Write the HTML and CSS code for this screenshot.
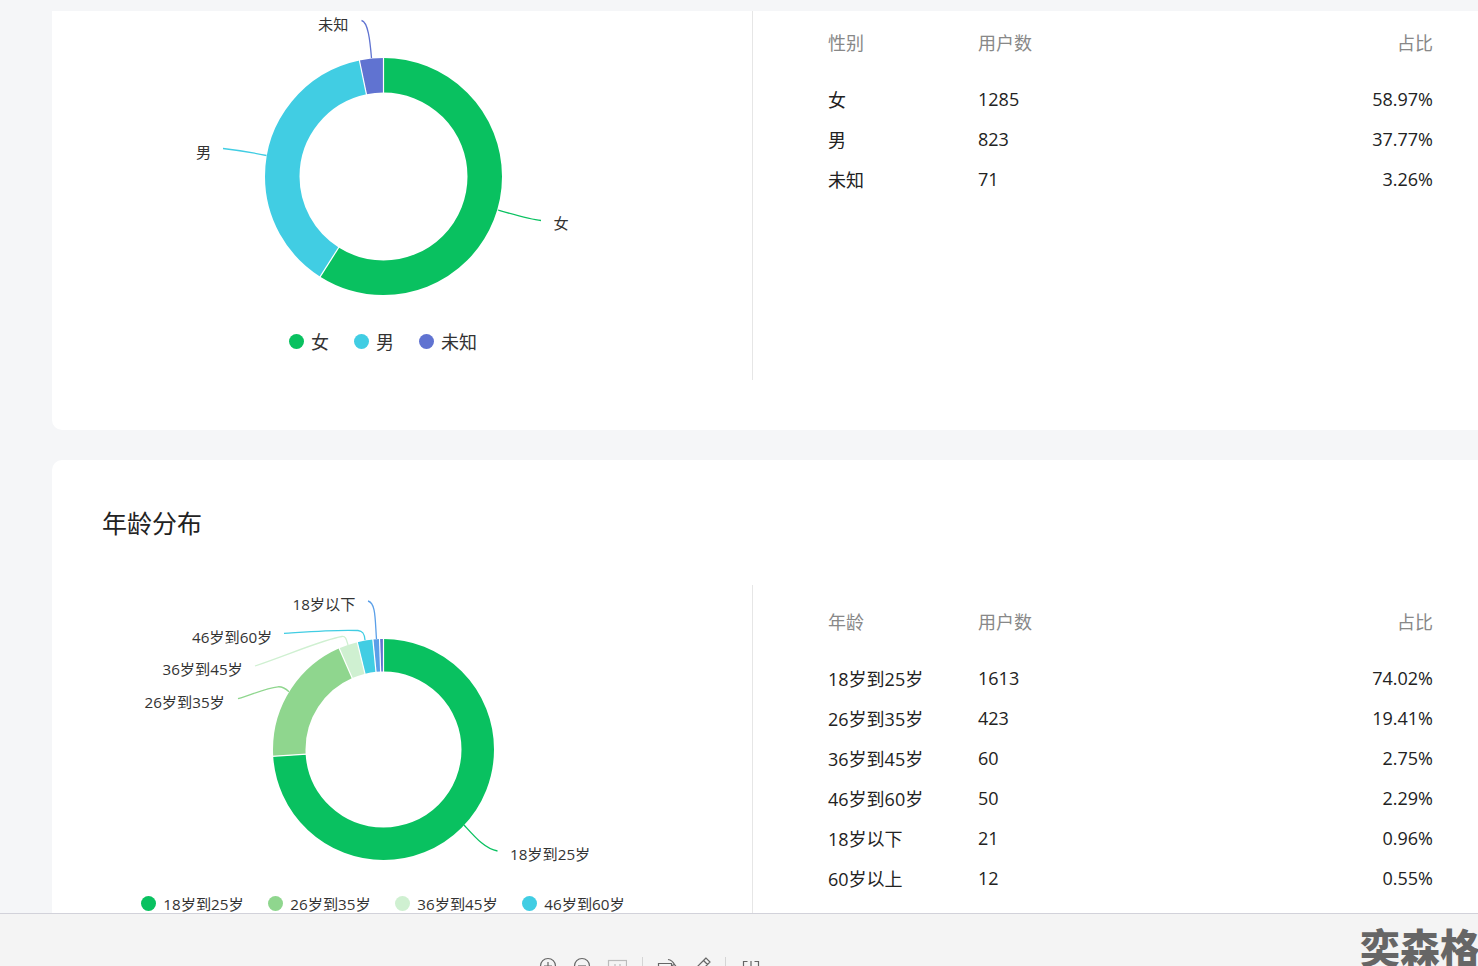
FILE: index.html
```html
<!DOCTYPE html>
<html lang="zh">
<head>
<meta charset="utf-8">
<title>用户分布</title>
<link rel="stylesheet" href="styles.css">
</head>
<body>
<main class="content">
  <section class="card card-gender">
    <div class="split split-gender">
      <div class="chart-pane">
        <svg class="chart chart-gender" viewBox="0 0 700 315" width="700" height="315">
          <g transform="translate(-52 -11)">
            <g fill="none" stroke-width="34.5" transform="rotate(-90 383.5 176.5)">
              <circle class="seg-green" cx="383.5" cy="176.5" r="101.25" pathLength="100" stroke-dasharray="58.97 41.03"/>
              <circle class="seg-cyan" cx="383.5" cy="176.5" r="101.25" pathLength="100" stroke-dasharray="37.77 62.23" stroke-dashoffset="-58.97"/>
              <circle class="seg-indigo" cx="383.5" cy="176.5" r="101.25" pathLength="100" stroke-dasharray="3.26 96.74" stroke-dashoffset="-96.74"/>
            </g>
            <g class="sep">
              <line x1="383.5" y1="93.5" x2="383.5" y2="56.5"/>
              <line x1="339.2" y1="246.7" x2="319.4" y2="277.9"/>
              <line x1="366.6" y1="95.2" x2="359.1" y2="59"/>
            </g>
            <g fill="none" class="leaders">
              <path class="ln-indigo" d="M371.5 58C370 40 368 22 361.5 20.5"/>
              <path class="ln-cyan" d="M266.5 155.5Q245 151 223 148.5"/>
              <path class="ln-green" d="M498 210C515 215 530 219.5 541 220.5"/>
            </g>
            <text class="lbl" x="318" y="30">未知</text>
            <text class="lbl" x="196" y="158">男</text>
            <text class="lbl" x="553.5" y="229">女</text>
          </g>
        </svg>
        <ul class="legend legend-lg">
          <li><i class="dot bg-green"></i>女</li>
          <li><i class="dot bg-cyan"></i>男</li>
          <li><i class="dot bg-indigo"></i>未知</li>
        </ul>
      </div>
      <div class="table-pane">
        <div class="row head"><span class="c1">性别</span><span class="c2">用户数</span><span class="c3">占比</span></div>
        <div class="row"><span class="c1">女</span><span class="c2">1285</span><span class="c3">58.97%</span></div>
        <div class="row"><span class="c1">男</span><span class="c2">823</span><span class="c3">37.77%</span></div>
        <div class="row"><span class="c1">未知</span><span class="c2">71</span><span class="c3">3.26%</span></div>
      </div>
    </div>
  </section>

  <section class="card card-age">
    <h2 class="card-title">年龄分布</h2>
    <div class="split split-age">
      <div class="chart-pane">
        <svg class="chart chart-age" viewBox="0 0 700 300" width="700" height="300">
          <g transform="translate(-52 -585)">
            <g fill="none" stroke-width="32.5" transform="rotate(-90 383.5 749.5)">
              <circle class="seg-green" cx="383.5" cy="749.5" r="94.25" pathLength="100" stroke-dasharray="74.02 25.98"/>
              <circle class="seg-lime" cx="383.5" cy="749.5" r="94.25" pathLength="100" stroke-dasharray="19.41 80.59" stroke-dashoffset="-74.02"/>
              <circle class="seg-pale" cx="383.5" cy="749.5" r="94.25" pathLength="100" stroke-dasharray="2.75 97.25" stroke-dashoffset="-93.43"/>
              <circle class="seg-cyan" cx="383.5" cy="749.5" r="94.25" pathLength="100" stroke-dasharray="2.29 97.71" stroke-dashoffset="-96.18"/>
              <circle class="seg-blue" cx="383.5" cy="749.5" r="94.25" pathLength="100" stroke-dasharray="0.96 99.04" stroke-dashoffset="-98.47"/>
              <circle class="seg-indigo" cx="383.5" cy="749.5" r="94.25" pathLength="100" stroke-dasharray="0.57 99.43" stroke-dashoffset="-99.43"/>
            </g>
            <g class="sep">
              <line x1="383.5" y1="672.5" x2="383.5" y2="637.5"/>
              <line x1="306.6" y1="754.2" x2="271.7" y2="756.4"/>
              <line x1="352.6" y1="679" x2="338.6" y2="646.9"/>
              <line x1="365.2" y1="674.7" x2="356.9" y2="640.7"/>
              <line x1="376.1" y1="672.9" x2="372.7" y2="638"/>
              <line x1="380.7" y1="672.5" x2="379.5" y2="637.6"/>
            </g>
            <g fill="none" class="leaders">
              <path class="ln-blue" d="M376.5 639C375 620 376 603 368 601"/>
              <path class="ln-cyan" d="M365 640C364.5 634 363 631 358 630.5C335 629.5 305 632 284 633.3"/>
              <path class="ln-pale" d="M348 645C346.5 640 346 636 342 636.5C325 639 290 654 255 666"/>
              <path class="ln-lime" d="M289 691.7C285 688 282 686.5 278 686.8C265 688 252 695 238 698.7"/>
              <path class="ln-green" d="M464 825C475 837 485 849 497.5 851"/>
            </g>
            <text class="lbl" x="292.5" y="610">18岁以下</text>
            <text class="lbl" x="192" y="643">46岁到60岁</text>
            <text class="lbl" x="162.5" y="675">36岁到45岁</text>
            <text class="lbl" x="144.5" y="708">26岁到35岁</text>
            <text class="lbl" x="510" y="860">18岁到25岁</text>
          </g>
        </svg>
        <ul class="legend legend-sm">
          <li><i class="dot bg-green"></i>18岁到25岁</li>
          <li><i class="dot bg-lime"></i>26岁到35岁</li>
          <li><i class="dot bg-pale"></i>36岁到45岁</li>
          <li><i class="dot bg-cyan"></i>46岁到60岁</li>
        </ul>
      </div>
      <div class="table-pane table-age">
        <div class="row head"><span class="c1">年龄</span><span class="c2">用户数</span><span class="c3">占比</span></div>
        <div class="row"><span class="c1">18岁到25岁</span><span class="c2">1613</span><span class="c3">74.02%</span></div>
        <div class="row"><span class="c1">26岁到35岁</span><span class="c2">423</span><span class="c3">19.41%</span></div>
        <div class="row"><span class="c1">36岁到45岁</span><span class="c2">60</span><span class="c3">2.75%</span></div>
        <div class="row"><span class="c1">46岁到60岁</span><span class="c2">50</span><span class="c3">2.29%</span></div>
        <div class="row"><span class="c1">18岁以下</span><span class="c2">21</span><span class="c3">0.96%</span></div>
        <div class="row"><span class="c1">60岁以上</span><span class="c2">12</span><span class="c3">0.55%</span></div>
      </div>
    </div>
  </section>
</main>

<footer class="toolbar">
  <div class="tools">
    <svg class="tool" width="20" height="20" viewBox="0 0 20 20"><circle cx="10" cy="10" r="7.5"/><path d="M10 6v8M6 10h8"/></svg>
    <svg class="tool t-gap" width="20" height="20" viewBox="0 0 20 20"><circle cx="10" cy="10" r="7.5"/><path d="M6 10h8"/></svg>
    <svg class="tool t-gap-box" width="20" height="20" viewBox="0 0 20 20"><rect class="faint" x="1.500" y="4.500" width="18" height="14"/><path class="faint" d="M8 8v7M13 8v7"/></svg>
    <i class="tool-div"></i>
    <svg class="tool" width="20" height="20" viewBox="0 0 20 20"><path d="M14.500 7.500H1.500V19h13zM11 3.500c3 .5 5 2 6.500 5M15 9.500l2.500-1 1.500 2"/></svg>
    <svg class="tool t-gap2" width="20" height="20" viewBox="0 0 20 20"><path d="M13 2L4 11v4h4L17 6zM10.500 4.500l4 4"/></svg>
    <i class="tool-div tool-div-b"></i>
    <svg class="tool" width="20" height="20" viewBox="0 0 20 20"><path d="M6.500 5.500h-4V18h15V5.500h-4M10 5v9M7 11l3 3 3-3"/></svg>
  </div>
  <div class="watermark">奕森格</div>
</footer>
</body>
</html>
```
FILE: styles.css
```css
* { box-sizing: border-box; }
html, body { margin: 0; height: 966px; overflow: hidden; }
body {
  width: 1478px;
  background: #f5f6f8;
  font-family: "Open Sans", "Noto Sans CJK SC", sans-serif;
  color: #333;
  display: flex;
  flex-direction: column;
  position: relative;
}
.content {
  height: 913px;
  overflow: hidden;
  padding: 11px 0 0 52px;
  display: flex;
  flex-direction: column;
  gap: 30px;
  flex: none;
}
.card {
  width: 1500px;
  background: #fff;
  border-radius: 10px;
  flex: none;
}
.card-gender { height: 419px; border-top-left-radius: 0; border-top-right-radius: 0; }
.card-age { height: 600px; padding-top: 40px; }
.card-title {
  margin: 0 0 0 50px;
  height: 85px;
  font-size: 25px;
  line-height: 46px;
  font-weight: 400;
  color: #222;
}
.split { display: flex; }
.split-gender { height: 369px; }
.chart-pane {
  width: 701px;
  flex: none;
  border-right: 1px solid #e6e6e6;
  display: flex;
  flex-direction: column;
  align-items: center;
}
.chart { display: block; flex: none; }
.seg-green { stroke: #09c160; }
.seg-cyan { stroke: #41cde3; }
.seg-indigo { stroke: #6073d1; }
.seg-lime { stroke: #8fd68e; }
.seg-pale { stroke: #cff0d1; }
.seg-blue { stroke: #5a9fe8; }
.sep line { stroke: #fff; stroke-width: 1.2; }
.leaders path { stroke-width: 1.3; }
.ln-green { stroke: #09c160; }
.ln-cyan { stroke: #41cde3; }
.ln-indigo { stroke: #6073d1; }
.ln-lime { stroke: #8fd68e; }
.ln-pale { stroke: #cff0d1; }
.ln-blue { stroke: #5a9fe8; }
.lbl { font-size: 15.2px; fill: #333; }
.legend {
  list-style: none;
  margin: 0 38px 0 0;
  padding: 0;
  display: flex;
  align-items: center;
  color: #333;
}
.legend li { display: flex; align-items: center; }
.dot { display: block; border-radius: 50%; flex: none; }
.bg-green { background: #09c160; }
.bg-cyan { background: #41cde3; }
.bg-indigo { background: #6073d1; }
.bg-lime { background: #8fd68e; }
.bg-pale { background: #cff0d1; }
.legend-lg { font-size: 18px; gap: 25px; height: 32px; margin-top: -1px; margin-bottom: 2px; }
.legend-lg .dot { width: 15px; height: 15px; margin-right: 7px; }
.legend-sm { font-size: 15.2px; gap: 24.7px; height: 24px; margin-top: 6px; }
.legend-sm .dot { width: 15px; height: 15px; margin-right: 7px; }
.table-pane { padding: 11px 0 0 75px; width: 680px; flex: none; }
.table-age { padding-top: 16px; }
.row {
  display: flex;
  height: 40px;
  align-items: center;
  font-size: 18px;
  color: #222;
}
.row.head { margin-bottom: 17px; color: #888; }
.c1 { width: 150px; flex: none; }
.c2 { flex: 1; }
.c3 { text-align: right; }
.toolbar {
  height: 53px;
  flex: none;
  background: #f4f4f4;
  border-top: 1px solid #d2d2da;
  overflow: hidden;
  position: relative;
}
.tools {
  display: flex;
  align-items: flex-start;
  padding: 42px 0 0 538px;
}
.tool { flex: none; fill: none; stroke: #666; stroke-width: 1.2; }
.t-gap { margin-left: 14px; }
.t-gap-box { margin-left: 15px; }
.t-gap2 { margin-left: 16px; }
.faint { stroke: #bbb; }
.tool-div { display: block; width: 1px; height: 20px; background: #d5d5d5; margin: 1px 14px 0 15px; flex: none; }
.tool-div-b { margin: 1px 15px 0 12px; }
.watermark {
  position: absolute;
  left: 1360px;
  top: 4px;
  font-size: 40px;
  line-height: 56px;
  font-weight: 900;
  color: #666;
  white-space: nowrap;
  font-family: "Noto Sans CJK SC", sans-serif;
}
```
